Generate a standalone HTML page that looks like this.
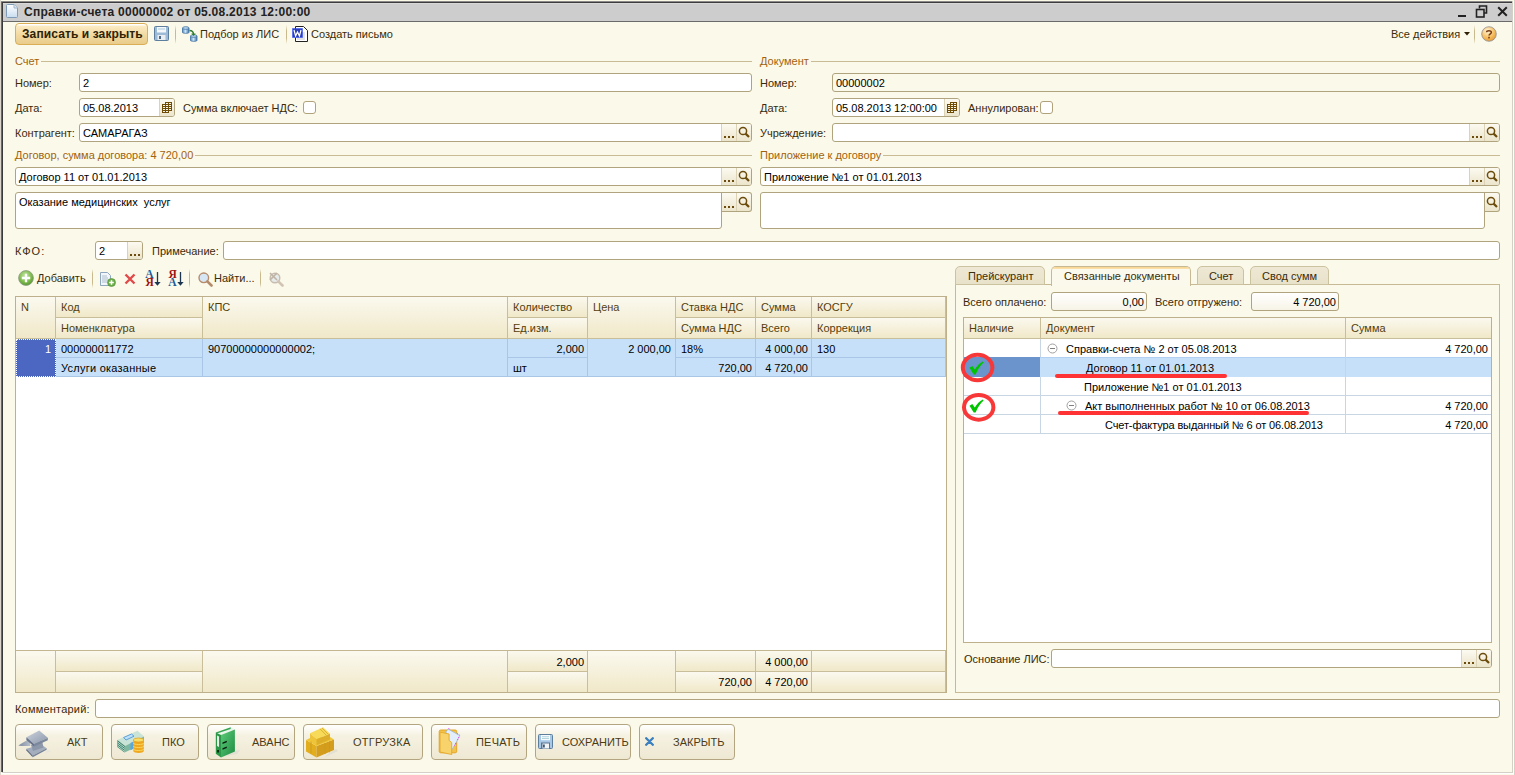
<!DOCTYPE html><html><head><meta charset="utf-8"><style>
*{box-sizing:border-box}
html,body{margin:0;padding:0;width:1515px;height:775px;overflow:hidden;background:#EDEBE2}
body{position:relative;font:11px "Liberation Sans",sans-serif;color:#000}
.a{position:absolute}
.t{position:absolute;white-space:nowrap;line-height:13px}
.lb{color:#3A2A0A}
.gl{color:#A2620C}
.in{background:#fff;border:1px solid #AFA47E;border-radius:3px}
.ro{background:#FBF9EA}
.bb{background:linear-gradient(#FCFAF1,#ECE5CC);border-left:1px solid #DCD3B6}
.hd{background:linear-gradient(#FBF9EF,#F0E8C8);border-right:1px solid #C8BE9A;border-bottom:1px solid #C8BE9A}
.ht{color:#533E0E}
.bt{color:#3A2D0A}
.btn{border:1px solid #B3A57F;border-radius:4px;background:linear-gradient(#FFFFFF 0%,#F6F2E2 30%,#EEE8D3 100%)}
</style></head><body>
<div class="a " style="left:0px;top:0px;width:1515px;height:775px;background:#FBF9E8"></div>
<div class="a " style="left:0px;top:0px;width:1px;height:775px;background:#DAD6CC"></div>
<div class="a " style="left:1px;top:3px;width:1511px;height:769px;background:#FBF9EA"></div>
<div class="a " style="left:1px;top:1px;width:1px;height:771px;background:#6A6A6A"></div>
<div class="a " style="left:2px;top:1px;width:1px;height:771px;background:#3A3A3A"></div>
<div class="a " style="left:1px;top:1px;width:1511px;height:1px;background:#8A8A8A"></div>
<div class="a " style="left:2px;top:2px;width:1510px;height:1px;background:#3C3C3C"></div>
<div class="a " style="left:1512px;top:1px;width:1px;height:772px;background:#D4D0C8"></div>
<div class="a " style="left:1513px;top:1px;width:1px;height:773px;background:#FFFFFF"></div>
<div class="a " style="left:1514px;top:0px;width:1px;height:775px;background:#D4D0C8"></div>
<div class="a " style="left:2px;top:772px;width:1511px;height:1px;background:#D4D0C8"></div>
<div class="a " style="left:1px;top:773px;width:1513px;height:1px;background:#FFFFFF"></div>
<div class="a " style="left:3px;top:3px;width:1509px;height:18px;background:#CDCDCD"></div>
<div class="a " style="left:3px;top:3px;width:1509px;height:1px;background:#D8D8D8"></div>
<div class="a " style="left:3px;top:21px;width:1509px;height:1px;background:#6A6A6A"></div>
<svg class="a" style="left:6px;top:4px" width="12" height="14" viewBox="0 0 12 14">
<defs><linearGradient id="dg" x1="0" y1="0" x2="0" y2="1"><stop offset="0" stop-color="#fff"/><stop offset="1" stop-color="#C9DDF0"/></linearGradient></defs>
<path d="M0.5 1.5Q0.5 0.5 1.5 0.5H8L11.5 4V12.5Q11.5 13.5 10.5 13.5H1.5Q0.5 13.5 0.5 12.5Z" fill="url(#dg)" stroke="#7E9BB8"/>
<path d="M8 0.5V4H11.5" fill="#DDE8F3" stroke="#9FB6CC"/></svg>
<div class="t " style="left:24px;top:6px;font-weight:bold;font-size:12px;letter-spacing:0.26px;color:#222">Справки-счета 00000002 от 05.08.2013 12:00:00</div>
<div class="a " style="left:1458px;top:15px;width:8px;height:2px;background:#222"></div>
<svg class="a" style="left:1475px;top:5px" width="14" height="13" viewBox="0 0 14 13">
<path d="M4.5 3.5V1H11.5V8H9" fill="none" stroke="#222" stroke-width="1.6"/>
<rect x="1.5" y="4.5" width="7.5" height="7.5" fill="none" stroke="#222" stroke-width="1.6"/></svg>
<svg class="a" style="left:1497px;top:6px" width="11" height="11" viewBox="0 0 11 11">
<path d="M1.2 1.2L9.8 9.8M9.8 1.2L1.2 9.8" stroke="#222" stroke-width="2"/></svg>
<div class="a" style="left:15px;top:23px;width:133px;height:22px;border:1px solid #D9AE55;border-radius:4px;background:linear-gradient(#FFFFFF 0,#FFFFFF 1px,#FBEBC4 2px,#F2D9A0 55%,#E9CC8C)"></div>
<div class="t " style="left:22px;top:28px;font-weight:bold;font-size:12px;letter-spacing:0.1px;color:#2E2206">Записать и закрыть</div>
<svg class="a" style="left:154px;top:26px" width="15" height="15" viewBox="0 0 15 15">
<rect x="0.5" y="0.5" width="14" height="14" rx="1" fill="#9DBAD6" stroke="#5E7E9E"/>
<rect x="3" y="1" width="9" height="5.5" fill="#F4F8FB"/><rect x="4" y="2.5" width="7" height="1" fill="#A9C7DF"/>
<rect x="3.5" y="9" width="8" height="5" fill="#E9EEF2"/><rect x="5" y="10" width="2" height="3" fill="#4E6A86"/></svg>
<div class="a " style="left:175px;top:25px;width:1px;height:19px;background:linear-gradient(rgba(196,182,140,0),#C9BA8E 30%,#C9BA8E 70%,rgba(196,182,140,0))"></div>
<svg class="a" style="left:182px;top:26px" width="16" height="16" viewBox="0 0 16 16">
<defs><linearGradient id="cy" x1="0" x2="1"><stop offset="0" stop-color="#4F8BC0"/><stop offset=".45" stop-color="#CFE6F7"/><stop offset="1" stop-color="#3C76AE"/></linearGradient></defs>
<path d="M0.5 2V6.5C0.5 7.6 7 7.6 7 6.5V2" fill="url(#cy)" stroke="#3E6F9E" stroke-width=".8"/><ellipse cx="3.75" cy="2" rx="3.25" ry="1.3" fill="#BFDDF3" stroke="#3E6F9E" stroke-width=".8"/>
<path d="M8.5 10V14.5C8.5 15.6 15 15.6 15 14.5V10" fill="url(#cy)" stroke="#3E6F9E" stroke-width=".8"/><ellipse cx="11.75" cy="10" rx="3.25" ry="1.3" fill="#BFDDF3" stroke="#3E6F9E" stroke-width=".8"/>
<path d="M7.5 4.5C10 4.5 11.5 6 11.5 8.5" fill="none" stroke="#2E7A2E" stroke-width="1.3"/><path d="M9.3 7.5L11.5 10L13.7 7.5Z" fill="#2E7A2E"/></svg>
<div class="t bt" style="left:200px;top:28px;">Подбор из ЛИС</div>
<div class="a " style="left:286px;top:25px;width:1px;height:19px;background:linear-gradient(rgba(196,182,140,0),#C9BA8E 30%,#C9BA8E 70%,rgba(196,182,140,0))"></div>
<svg class="a" style="left:292px;top:26px" width="16" height="16" viewBox="0 0 16 16">
<path d="M3.5 0.5H11.5L15.5 4.5V15.5H3.5Z" fill="#fff" stroke="#222"/><path d="M5 7h8M5 9h8M5 11h8M5 13h8" stroke="#BBB" stroke-width=".8"/>
<rect x="0.5" y="2.5" width="10" height="9" fill="#2A3FB8" stroke="#2B4BFF" stroke-dasharray="1 1"/>
<path d="M2 4L3.6 10L5.5 6L7.4 10L9 4" fill="none" stroke="#fff" stroke-width="1.2"/></svg>
<div class="t bt" style="left:311px;top:28px;">Создать письмо</div>
<div class="t bt" style="left:1391px;top:28px;">Все действия</div>
<svg class="a" style="left:1464px;top:32px" width="6" height="4" viewBox="0 0 6 4"><path d="M0 0H6L3 3.5Z" fill="#2E2206"/></svg>
<div class="a " style="left:1474px;top:25px;width:1px;height:19px;background:linear-gradient(rgba(196,182,140,0),#C9BA8E 30%,#C9BA8E 70%,rgba(196,182,140,0))"></div>
<svg class="a" style="left:1481px;top:26px" width="16" height="16" viewBox="0 0 16 16">
<defs><radialGradient id="hg" cx=".4" cy=".3" r=".8"><stop offset="0" stop-color="#FFF6E0"/><stop offset=".5" stop-color="#F8C46A"/><stop offset="1" stop-color="#E0902A"/></radialGradient></defs>
<circle cx="8" cy="8" r="7.3" fill="url(#hg)" stroke="#8E8E96" stroke-width=".8"/>
<path d="M5.6 6.2C5.6 4.2 10.4 4.2 10.4 6.2C10.4 7.8 8 7.8 8 9.6" fill="none" stroke="#7A3E12" stroke-width="1.5"/><rect x="7.2" y="10.8" width="1.6" height="1.6" fill="#7A3E12"/></svg>
<div class="t gl" style="left:15px;top:55px;">Счет</div>
<div class="a" style="left:15px;top:61px;width:737px;height:1px;background:#C9BC95"></div>
<div class="t gl" style="left:15px;top:55px;background:#FBF9EA;padding-right:2px">Счет</div>
<div class="t gl" style="left:760px;top:55px;">Документ</div>
<div class="a" style="left:760px;top:61px;width:740px;height:1px;background:#C9BC95"></div>
<div class="t gl" style="left:760px;top:55px;background:#FBF9EA;padding-right:2px">Документ</div>
<div class="t lb" style="left:15px;top:77px;">Номер:</div>
<div class="a in" style="left:79px;top:73px;width:673px;height:19px;"></div>
<div class="t " style="left:83px;top:77px;">2</div>
<div class="t lb" style="left:760px;top:77px;">Номер:</div>
<div class="a in ro" style="left:832px;top:73px;width:668px;height:19px;"></div>
<div class="t " style="left:836px;top:77px;">00000002</div>
<div class="t lb" style="left:15px;top:102px;">Дата:</div>
<div class="a in" style="left:79px;top:98px;width:96px;height:19px;"></div>
<div class="a bb" style="left:159px;top:99px;width:15px;height:17px;border-radius:0 2px 2px 0"></div>
<svg class="a" style="left:162px;top:102px" width="11" height="11" viewBox="0 0 11 11" shape-rendering="crispEdges"><path d="M3 0H10V9H7V11H0V2H3Z" fill="#6E4C05"/><path d="M4 1h2v1h-2zM7 1h2v1h-2zM1 3h2v1h-2zM4 3h2v1h-2zM7 3h2v1h-2zM1 5h2v1h-2zM4 5h2v1h-2zM7 5h2v1h-2zM1 7h2v1h-2zM4 7h2v1h-2zM7 7h2v1h-2zM1 9h2v1h-2zM4 9h2v1h-2z" fill="#FBF6E6"/></svg>
<div class="t " style="left:83px;top:102px;">05.08.2013</div>
<div class="t lb" style="left:183px;top:102px;">Сумма включает НДС:</div>
<div class="a" style="left:303px;top:101px;width:13px;height:13px;border:1px solid #B0A27B;border-radius:3px;background:#fff"></div>
<div class="t lb" style="left:760px;top:102px;">Дата:</div>
<div class="a in" style="left:832px;top:98px;width:128px;height:19px;"></div>
<div class="a bb" style="left:944px;top:99px;width:15px;height:17px;border-radius:0 2px 2px 0"></div>
<svg class="a" style="left:947px;top:102px" width="11" height="11" viewBox="0 0 11 11" shape-rendering="crispEdges"><path d="M3 0H10V9H7V11H0V2H3Z" fill="#6E4C05"/><path d="M4 1h2v1h-2zM7 1h2v1h-2zM1 3h2v1h-2zM4 3h2v1h-2zM7 3h2v1h-2zM1 5h2v1h-2zM4 5h2v1h-2zM7 5h2v1h-2zM1 7h2v1h-2zM4 7h2v1h-2zM7 7h2v1h-2zM1 9h2v1h-2zM4 9h2v1h-2z" fill="#FBF6E6"/></svg>
<div class="t " style="left:836px;top:102px;">05.08.2013 12:00:00</div>
<div class="t lb" style="left:968px;top:102px;">Аннулирован:</div>
<div class="a" style="left:1040px;top:101px;width:13px;height:13px;border:1px solid #B0A27B;border-radius:3px;background:#fff"></div>
<div class="t lb" style="left:15px;top:127px;">Контрагент:</div>
<div class="a in" style="left:79px;top:123px;width:673px;height:19px;"></div>
<div class="a bb" style="left:721px;top:124px;width:30px;height:17px;border-radius:0 2px 2px 0"></div>
<svg class="a" style="left:724px;top:136px" width="12" height="3"><rect x="0" y="0" width="2" height="2" fill="#6B4C0C"/><rect x="4" y="0" width="2" height="2" fill="#6B4C0C"/><rect x="8" y="0" width="2" height="2" fill="#6B4C0C"/></svg>
<div class="a" style="left:736px;top:124px;width:1px;height:17px;background:#DCD3B6"></div>
<svg class="a" style="left:738px;top:126px" width="13" height="13" viewBox="0 0 13 13"><circle cx="5" cy="5" r="3.6" fill="none" stroke="#6B4C0C" stroke-width="1.5"/><path d="M7.6 7.6L11 11" stroke="#6B4C0C" stroke-width="2.2"/></svg>
<div class="t " style="left:83px;top:127px;">САМАРАГАЗ</div>
<div class="t lb" style="left:760px;top:127px;">Учреждение:</div>
<div class="a in" style="left:832px;top:123px;width:668px;height:19px;"></div>
<div class="a bb" style="left:1469px;top:124px;width:30px;height:17px;border-radius:0 2px 2px 0"></div>
<svg class="a" style="left:1472px;top:136px" width="12" height="3"><rect x="0" y="0" width="2" height="2" fill="#6B4C0C"/><rect x="4" y="0" width="2" height="2" fill="#6B4C0C"/><rect x="8" y="0" width="2" height="2" fill="#6B4C0C"/></svg>
<div class="a" style="left:1484px;top:124px;width:1px;height:17px;background:#DCD3B6"></div>
<svg class="a" style="left:1486px;top:126px" width="13" height="13" viewBox="0 0 13 13"><circle cx="5" cy="5" r="3.6" fill="none" stroke="#6B4C0C" stroke-width="1.5"/><path d="M7.6 7.6L11 11" stroke="#6B4C0C" stroke-width="2.2"/></svg>
<div class="t gl" style="left:15px;top:149px;">Договор, сумма договора: 4 720,00</div>
<div class="a" style="left:15px;top:155px;width:737px;height:1px;background:#C9BC95"></div>
<div class="t gl" style="left:15px;top:149px;background:#FBF9EA;padding-right:2px">Договор, сумма договора: 4 720,00</div>
<div class="t gl" style="left:760px;top:149px;">Приложение к договору</div>
<div class="a" style="left:760px;top:155px;width:740px;height:1px;background:#C9BC95"></div>
<div class="t gl" style="left:760px;top:149px;background:#FBF9EA;padding-right:2px">Приложение к договору</div>
<div class="a in" style="left:15px;top:167px;width:737px;height:19px;"></div>
<div class="a bb" style="left:721px;top:168px;width:30px;height:17px;border-radius:0 2px 2px 0"></div>
<svg class="a" style="left:724px;top:180px" width="12" height="3"><rect x="0" y="0" width="2" height="2" fill="#6B4C0C"/><rect x="4" y="0" width="2" height="2" fill="#6B4C0C"/><rect x="8" y="0" width="2" height="2" fill="#6B4C0C"/></svg>
<div class="a" style="left:736px;top:168px;width:1px;height:17px;background:#DCD3B6"></div>
<svg class="a" style="left:738px;top:170px" width="13" height="13" viewBox="0 0 13 13"><circle cx="5" cy="5" r="3.6" fill="none" stroke="#6B4C0C" stroke-width="1.5"/><path d="M7.6 7.6L11 11" stroke="#6B4C0C" stroke-width="2.2"/></svg>
<div class="t " style="left:19px;top:171px;">Договор 11 от 01.01.2013</div>
<div class="a in" style="left:760px;top:167px;width:740px;height:19px;"></div>
<div class="a bb" style="left:1469px;top:168px;width:30px;height:17px;border-radius:0 2px 2px 0"></div>
<svg class="a" style="left:1472px;top:180px" width="12" height="3"><rect x="0" y="0" width="2" height="2" fill="#6B4C0C"/><rect x="4" y="0" width="2" height="2" fill="#6B4C0C"/><rect x="8" y="0" width="2" height="2" fill="#6B4C0C"/></svg>
<div class="a" style="left:1484px;top:168px;width:1px;height:17px;background:#DCD3B6"></div>
<svg class="a" style="left:1486px;top:170px" width="13" height="13" viewBox="0 0 13 13"><circle cx="5" cy="5" r="3.6" fill="none" stroke="#6B4C0C" stroke-width="1.5"/><path d="M7.6 7.6L11 11" stroke="#6B4C0C" stroke-width="2.2"/></svg>
<div class="t " style="left:764px;top:171px;">Приложение №1 от 01.01.2013</div>
<div class="a in" style="left:15px;top:192px;width:707px;height:37px;border-top-right-radius:0"></div>
<div class="t " style="left:19px;top:196px;">Оказание медицинских&nbsp; услуг</div>
<div class="a" style="left:721px;top:192px;width:31px;height:20px;border:1px solid #AFA47E;border-left:0;border-radius:0 3px 3px 0;background:linear-gradient(#FCFAF1,#ECE5CC)"></div>
<div class="a" style="left:721px;top:193px;width:1px;height:33px;background:#AFA47E"></div>
<div class="a" style="left:736px;top:193px;width:1px;height:18px;background:#DCD3B6"></div>
<svg class="a" style="left:724px;top:206px" width="12" height="3"><rect x="0" y="0" width="2" height="2" fill="#6B4C0C"/><rect x="4" y="0" width="2" height="2" fill="#6B4C0C"/><rect x="8" y="0" width="2" height="2" fill="#6B4C0C"/></svg>
<svg class="a" style="left:738px;top:196px" width="13" height="13" viewBox="0 0 13 13"><circle cx="5" cy="5" r="3.6" fill="none" stroke="#6B4C0C" stroke-width="1.5"/><path d="M7.6 7.6L11 11" stroke="#6B4C0C" stroke-width="2.2"/></svg>
<div class="a in" style="left:760px;top:192px;width:725px;height:37px;border-top-right-radius:0"></div>
<div class="a" style="left:1484px;top:192px;width:16px;height:20px;border:1px solid #AFA47E;border-left:0;border-radius:0 3px 3px 0;background:linear-gradient(#FCFAF1,#ECE5CC)"></div>
<div class="a" style="left:1484px;top:193px;width:1px;height:33px;background:#AFA47E"></div>
<svg class="a" style="left:1486px;top:196px" width="13" height="13" viewBox="0 0 13 13"><circle cx="5" cy="5" r="3.6" fill="none" stroke="#6B4C0C" stroke-width="1.5"/><path d="M7.6 7.6L11 11" stroke="#6B4C0C" stroke-width="2.2"/></svg>
<div class="t lb" style="left:15px;top:245px;letter-spacing:1.1px">КФО:</div>
<div class="a in" style="left:95px;top:241px;width:48px;height:19px;"></div>
<div class="a bb" style="left:127px;top:242px;width:15px;height:17px;border-radius:0 2px 2px 0"></div>
<svg class="a" style="left:130px;top:254px" width="12" height="3"><rect x="0" y="0" width="2" height="2" fill="#6B4C0C"/><rect x="4" y="0" width="2" height="2" fill="#6B4C0C"/><rect x="8" y="0" width="2" height="2" fill="#6B4C0C"/></svg>
<div class="t " style="left:99px;top:245px;">2</div>
<div class="t lb" style="left:152px;top:245px;">Примечание:</div>
<div class="a in" style="left:223px;top:241px;width:1277px;height:19px;"></div>
<svg class="a" style="left:18px;top:270px" width="16" height="16" viewBox="0 0 16 16">
<defs><radialGradient id="gg" cx=".45" cy=".35" r=".7"><stop offset="0" stop-color="#C8E6A8"/><stop offset=".6" stop-color="#7DBB4C"/><stop offset="1" stop-color="#4E8F2A"/></radialGradient></defs>
<circle cx="8" cy="8" r="7.4" fill="url(#gg)" stroke="#8A9A80" stroke-width=".8"/><path d="M8 3.8V12.2M3.8 8H12.2" stroke="#fff" stroke-width="2.3"/></svg>
<div class="t bt" style="left:37px;top:272px;">Добавить</div>
<div class="a" style="left:92px;top:269px;width:1px;height:19px;background:linear-gradient(rgba(201,186,142,0),#C9BA8E 25%,#C9BA8E 75%,rgba(201,186,142,0))"></div>
<svg class="a" style="left:100px;top:272px" width="16" height="15" viewBox="0 0 16 15">
<path d="M0.5 0.5H7.5L10.5 3.5V13.5H0.5Z" fill="#F2F6FA" stroke="#8EA6BE"/><path d="M2 4h5M2 6h6M2 8h6M2 10h5" stroke="#9DB0C4" stroke-width=".8"/>
<circle cx="11.5" cy="10.5" r="4" fill="#6DB04A" stroke="#4F8A33" stroke-width=".6"/><path d="M11.5 8.2V12.8M9.2 10.5H13.8" stroke="#fff" stroke-width="1.5"/></svg>
<svg class="a" style="left:124px;top:273px" width="12" height="12" viewBox="0 0 12 12">
<path d="M1.5 1.5L10.5 10.5M10.5 1.5L1.5 10.5" stroke="#E04A4A" stroke-width="2.4"/></svg>
<svg class="a" style="left:144px;top:268px" width="20" height="20" viewBox="0 0 20 20">
<text x="1.3" y="10" font-family="Liberation Serif" font-weight="bold" font-size="11.5" fill="#1F5E9C">A</text>
<text x="1.6" y="18.3" font-family="Liberation Serif" font-weight="bold" font-size="11.5" fill="#A01010">Я</text>
<path d="M13.5 4V15" stroke="#1C3550" stroke-width="1.3"/><path d="M10.3 14H16.6L13.45 17.8Z" fill="#1C3550"/></svg>
<svg class="a" style="left:167px;top:268px" width="20" height="20" viewBox="0 0 20 20">
<text x="1.6" y="10.2" font-family="Liberation Serif" font-weight="bold" font-size="11.5" fill="#A01010">Я</text>
<text x="1.3" y="18.2" font-family="Liberation Serif" font-weight="bold" font-size="11.5" fill="#1F5E9C">A</text>
<path d="M13.5 4V15" stroke="#1C3550" stroke-width="1.3"/><path d="M10.3 14H16.6L13.45 17.8Z" fill="#1C3550"/></svg>
<div class="a" style="left:189px;top:269px;width:1px;height:19px;background:linear-gradient(rgba(201,186,142,0),#C9BA8E 25%,#C9BA8E 75%,rgba(201,186,142,0))"></div>
<svg class="a" style="left:198px;top:272px" width="15" height="15" viewBox="0 0 15 15">
<circle cx="5.8" cy="5.8" r="4.8" fill="#D6E6F5" stroke="#B58B6A" stroke-width="1.4"/><path d="M9.3 9.3L13.5 13.5" stroke="#B58B6A" stroke-width="2.6" stroke-linecap="round"/></svg>
<div class="t bt" style="left:214px;top:272px;">Найти...</div>
<div class="a" style="left:260px;top:269px;width:1px;height:19px;background:linear-gradient(rgba(201,186,142,0),#C9BA8E 25%,#C9BA8E 75%,rgba(201,186,142,0))"></div>
<svg class="a" style="left:268px;top:271px" width="16" height="16" viewBox="0 0 16 16" opacity=".55">
<circle cx="7" cy="7" r="4.8" fill="#D6E0EA" stroke="#A08C7C" stroke-width="1.4"/><path d="M10.3 10.3L14.5 14.5" stroke="#B09A88" stroke-width="2.6" stroke-linecap="round"/>
<path d="M2 2L9 9M9 2L2 9" stroke="#8E7A6C" stroke-width="1.6"/></svg>
<div class="a" style="left:15px;top:296px;width:932px;height:397px;background:#fff;border:1px solid #BDB08A"></div>
<div class="a hd" style="left:16px;top:297px;width:40px;height:42px"></div>
<div class="t ht" style="left:21px;top:301px;">N</div>
<div class="a hd" style="left:56px;top:297px;width:147px;height:21px"></div>
<div class="a hd" style="left:56px;top:318px;width:147px;height:21px"></div>
<div class="t ht" style="left:61px;top:301px;">Код</div>
<div class="t ht" style="left:61px;top:322px;">Номенклатура</div>
<div class="a hd" style="left:203px;top:297px;width:305px;height:42px"></div>
<div class="t ht" style="left:208px;top:301px;">КПС</div>
<div class="a hd" style="left:508px;top:297px;width:80px;height:21px"></div>
<div class="a hd" style="left:508px;top:318px;width:80px;height:21px"></div>
<div class="t ht" style="left:513px;top:301px;">Количество</div>
<div class="t ht" style="left:513px;top:322px;">Ед.изм.</div>
<div class="a hd" style="left:588px;top:297px;width:88px;height:42px"></div>
<div class="t ht" style="left:593px;top:301px;">Цена</div>
<div class="a hd" style="left:676px;top:297px;width:80px;height:21px"></div>
<div class="a hd" style="left:676px;top:318px;width:80px;height:21px"></div>
<div class="t ht" style="left:681px;top:301px;">Ставка НДС</div>
<div class="t ht" style="left:681px;top:322px;">Сумма НДС</div>
<div class="a hd" style="left:756px;top:297px;width:56px;height:21px"></div>
<div class="a hd" style="left:756px;top:318px;width:56px;height:21px"></div>
<div class="t ht" style="left:761px;top:301px;">Сумма</div>
<div class="t ht" style="left:761px;top:322px;">Всего</div>
<div class="a hd" style="left:812px;top:297px;width:134px;height:21px"></div>
<div class="a hd" style="left:812px;top:318px;width:134px;height:21px"></div>
<div class="t ht" style="left:817px;top:301px;">КОСГУ</div>
<div class="t ht" style="left:817px;top:322px;">Коррекция</div>
<div class="a" style="left:16px;top:339px;width:930px;height:38px;background:#C7E0FA;border-bottom:1px solid #A9C6E6"></div>
<div class="a" style="left:202px;top:339px;width:1px;height:38px;background:#A9C6E6"></div>
<div class="a" style="left:56px;top:357px;width:146px;height:1px;background:#A9C6E6"></div>
<div class="a" style="left:507px;top:339px;width:1px;height:38px;background:#A9C6E6"></div>
<div class="a" style="left:587px;top:339px;width:1px;height:38px;background:#A9C6E6"></div>
<div class="a" style="left:508px;top:357px;width:79px;height:1px;background:#A9C6E6"></div>
<div class="a" style="left:675px;top:339px;width:1px;height:38px;background:#A9C6E6"></div>
<div class="a" style="left:755px;top:339px;width:1px;height:38px;background:#A9C6E6"></div>
<div class="a" style="left:676px;top:357px;width:79px;height:1px;background:#A9C6E6"></div>
<div class="a" style="left:811px;top:339px;width:1px;height:38px;background:#A9C6E6"></div>
<div class="a" style="left:756px;top:357px;width:55px;height:1px;background:#A9C6E6"></div>
<div class="a" style="left:945px;top:339px;width:1px;height:38px;background:#A9C6E6"></div>
<div class="a" style="left:812px;top:357px;width:133px;height:1px;background:#A9C6E6"></div>
<div class="a" style="left:16px;top:339px;width:40px;height:38px;background:#4B67C1;border:1px dotted #fff"></div>
<div class="t " style="right:1464px;top:343px;color:#fff">1</div>
<div class="t " style="left:61px;top:343px;">000000011772</div>
<div class="t " style="left:61px;top:362px;letter-spacing:0.25px">Услуги оказанные</div>
<div class="t " style="left:208px;top:343px;">90700000000000002;</div>
<div class="t " style="right:931px;top:343px;">2,000</div>
<div class="t " style="left:513px;top:362px;">шт</div>
<div class="t " style="right:844px;top:343px;">2 000,00</div>
<div class="t " style="left:681px;top:343px;">18%</div>
<div class="t " style="right:763px;top:362px;">720,00</div>
<div class="t " style="right:707px;top:343px;">4 000,00</div>
<div class="t " style="right:707px;top:362px;">4 720,00</div>
<div class="t " style="left:817px;top:343px;">130</div>
<div class="a hd" style="left:16px;top:650px;width:40px;height:42px;border-top:1px solid #C3B791;border-bottom:0"></div>
<div class="a hd" style="left:56px;top:650px;width:147px;height:22px;border-top:1px solid #C3B791"></div>
<div class="a hd" style="left:56px;top:672px;width:147px;height:20px;border-bottom:0"></div>
<div class="a hd" style="left:203px;top:650px;width:305px;height:42px;border-top:1px solid #C3B791;border-bottom:0"></div>
<div class="a hd" style="left:508px;top:650px;width:80px;height:22px;border-top:1px solid #C3B791"></div>
<div class="a hd" style="left:508px;top:672px;width:80px;height:20px;border-bottom:0"></div>
<div class="a hd" style="left:588px;top:650px;width:88px;height:42px;border-top:1px solid #C3B791;border-bottom:0"></div>
<div class="a hd" style="left:676px;top:650px;width:80px;height:22px;border-top:1px solid #C3B791"></div>
<div class="a hd" style="left:676px;top:672px;width:80px;height:20px;border-bottom:0"></div>
<div class="a hd" style="left:756px;top:650px;width:56px;height:22px;border-top:1px solid #C3B791"></div>
<div class="a hd" style="left:756px;top:672px;width:56px;height:20px;border-bottom:0"></div>
<div class="a hd" style="left:812px;top:650px;width:134px;height:22px;border-top:1px solid #C3B791"></div>
<div class="a hd" style="left:812px;top:672px;width:134px;height:20px;border-bottom:0"></div>
<div class="t " style="right:931px;top:656px;">2,000</div>
<div class="t " style="right:707px;top:656px;">4 000,00</div>
<div class="t " style="right:763px;top:676px;">720,00</div>
<div class="t " style="right:707px;top:676px;">4 720,00</div>
<div class="a" style="left:955px;top:284px;width:545px;height:409px;border:1px solid #C6B994;background:#FBF9EA"></div>
<div class="a" style="left:955px;top:266px;width:90px;height:19px;border:1px solid #C6B994;border-radius:5px 5px 0 0;border-color:#CBC2A0;background:linear-gradient(#EEE8D4,#E9E2CA)"></div>
<div class="t bt" style="left:968px;top:270px;">Прейскурант</div>
<div class="a" style="left:1051px;top:266px;width:140px;height:20px;border:1px solid #C6B994;border-bottom:0;border-radius:5px 5px 0 0;background:linear-gradient(#FBF9EC,#FBF9EC);overflow:hidden"><div style="height:2px;background:linear-gradient(#F8D48C,#FBE2B0)"></div></div>
<div class="t bt" style="left:1064px;top:270px;">Связанные документы</div>
<div class="a" style="left:1197px;top:266px;width:47px;height:19px;border:1px solid #C6B994;border-radius:5px 5px 0 0;border-color:#CBC2A0;background:linear-gradient(#EEE8D4,#E9E2CA)"></div>
<div class="t bt" style="left:1209px;top:270px;">Счет</div>
<div class="a" style="left:1250px;top:266px;width:79px;height:19px;border:1px solid #C6B994;border-radius:5px 5px 0 0;border-color:#CBC2A0;background:linear-gradient(#EEE8D4,#E9E2CA)"></div>
<div class="t bt" style="left:1262px;top:270px;">Свод сумм</div>
<div class="t lb" style="left:963px;top:296px;">Всего оплачено:</div>
<div class="a in ro" style="left:1051px;top:292px;width:96px;height:19px;background:linear-gradient(#FFFFFF,#F7F4E6)"></div>
<div class="t " style="right:371px;top:296px;">0,00</div>
<div class="t lb" style="left:1155px;top:296px;">Всего отгружено:</div>
<div class="a in ro" style="left:1251px;top:292px;width:88px;height:19px;background:linear-gradient(#FFFFFF,#F7F4E6)"></div>
<div class="t " style="right:179px;top:296px;">4 720,00</div>
<div class="a" style="left:963px;top:317px;width:529px;height:326px;background:#fff;border:1px solid #BDB08A"></div>
<div class="a hd" style="left:964px;top:318px;width:77px;height:21px;"></div>
<div class="t ht" style="left:969px;top:322px;">Наличие</div>
<div class="a hd" style="left:1041px;top:318px;width:305px;height:21px;"></div>
<div class="t ht" style="left:1046px;top:322px;">Документ</div>
<div class="a hd" style="left:1346px;top:318px;width:145px;height:21px;border-right:0"></div>
<div class="t ht" style="left:1351px;top:322px;">Сумма</div>
<div class="a" style="left:964px;top:357px;width:527px;height:1px;background:#C8D5E3"></div>
<div class="a" style="left:964px;top:376px;width:527px;height:1px;background:#C8D5E3"></div>
<div class="a" style="left:964px;top:395px;width:527px;height:1px;background:#C8D5E3"></div>
<div class="a" style="left:964px;top:414px;width:527px;height:1px;background:#C8D5E3"></div>
<div class="a" style="left:964px;top:433px;width:527px;height:1px;background:#C8D5E3"></div>
<div class="a" style="left:1040px;top:339px;width:1px;height:95px;background:#C8D5E3"></div>
<div class="a" style="left:964px;top:357px;width:527px;height:20px;background:#C7E0FA;border-top:1px solid #B2D0F2"></div>
<div class="a" style="left:964px;top:357px;width:76px;height:20px;background:#6A94CB"></div>
<div class="a" style="left:1345px;top:339px;width:1px;height:95px;background:#C8D5E3"></div>
<svg class="a" style="left:1047px;top:343px" width="11" height="11" viewBox="0 0 11 11"><circle cx="5.5" cy="5.5" r="4.5" fill="#fff" stroke="#A0A0A0"/><path d="M3 5.5H8" stroke="#808080"/></svg>
<div class="t " style="left:1066px;top:343px;">Справки-счета № 2 от 05.08.2013</div>
<div class="t " style="right:27px;top:343px;">4 720,00</div>
<div class="t " style="left:1086px;top:362px;">Договор 11 от 01.01.2013</div>
<div class="t " style="left:1084px;top:381px;">Приложение №1 от 01.01.2013</div>
<svg class="a" style="left:1066px;top:400px" width="11" height="11" viewBox="0 0 11 11"><circle cx="5.5" cy="5.5" r="4.5" fill="#fff" stroke="#A0A0A0"/><path d="M3 5.5H8" stroke="#808080"/></svg>
<div class="t " style="left:1085px;top:400px;">Акт выполненных работ № 10 от 06.08.2013</div>
<div class="t " style="right:27px;top:400px;">4 720,00</div>
<div class="t " style="left:1105px;top:419px;letter-spacing:-0.12px">Счет-фактура выданный № 6 от 06.08.2013</div>
<div class="t " style="right:27px;top:419px;">4 720,00</div>
<svg class="a" style="left:969px;top:361px" width="15" height="14" viewBox="0 0 15 14"><path d="M0.5 6.8L3.3 5L5.8 8.6C8 5 10.5 2.3 13.8 0.5L14.6 1.4C11.5 4 8.8 8 6.6 13.5H4.7Z" fill="#00C400"/></svg>
<svg class="a" style="left:969px;top:399px" width="15" height="14" viewBox="0 0 15 14"><path d="M0.5 6.8L3.3 5L5.8 8.6C8 5 10.5 2.3 13.8 0.5L14.6 1.4C11.5 4 8.8 8 6.6 13.5H4.7Z" fill="#00C400"/></svg>
<svg class="a" style="left:958px;top:350px" width="42" height="36" viewBox="0 0 42 36"><ellipse cx="19.6" cy="17.5" rx="14.8" ry="12.8" fill="none" stroke="#F83838" stroke-width="4"/></svg>
<svg class="a" style="left:958px;top:389px" width="42" height="36" viewBox="0 0 42 36"><ellipse cx="20.7" cy="18.3" rx="14.7" ry="12.4" fill="none" stroke="#F83838" stroke-width="4"/></svg>
<div class="a" style="left:1055px;top:374px;width:172px;height:4px;border-radius:2px;background:#FF3333"></div>
<div class="a" style="left:1058px;top:411px;width:251px;height:4px;border-radius:2px;background:#FF3333"></div>
<div class="t lb" style="left:964px;top:653px;">Основание ЛИС:</div>
<div class="a in" style="left:1051px;top:649px;width:441px;height:19px;"></div>
<div class="a bb" style="left:1461px;top:650px;width:30px;height:17px;border-radius:0 2px 2px 0"></div>
<svg class="a" style="left:1464px;top:662px" width="12" height="3"><rect x="0" y="0" width="2" height="2" fill="#6B4C0C"/><rect x="4" y="0" width="2" height="2" fill="#6B4C0C"/><rect x="8" y="0" width="2" height="2" fill="#6B4C0C"/></svg>
<div class="a" style="left:1476px;top:650px;width:1px;height:17px;background:#DCD3B6"></div>
<svg class="a" style="left:1478px;top:652px" width="13" height="13" viewBox="0 0 13 13"><circle cx="5" cy="5" r="3.6" fill="none" stroke="#6B4C0C" stroke-width="1.5"/><path d="M7.6 7.6L11 11" stroke="#6B4C0C" stroke-width="2.2"/></svg>
<div class="t lb" style="left:15px;top:703px;letter-spacing:0.2px">Комментарий:</div>
<div class="a in" style="left:95px;top:699px;width:1405px;height:19px;"></div>
<div class="a btn" style="left:15px;top:724px;width:88px;height:36px"></div>
<div class="t bt" style="left:67px;top:736px;letter-spacing:0px;color:#4A3B14">АКТ</div>
<div class="a btn" style="left:111px;top:724px;width:88px;height:36px"></div>
<div class="t bt" style="left:162px;top:736px;letter-spacing:0px;color:#4A3B14">ПКО</div>
<div class="a btn" style="left:207px;top:724px;width:88px;height:36px"></div>
<div class="t bt" style="left:252px;top:736px;letter-spacing:0px;color:#4A3B14">АВАНС</div>
<div class="a btn" style="left:303px;top:724px;width:120px;height:36px"></div>
<div class="t bt" style="left:353px;top:736px;letter-spacing:0.25px;color:#4A3B14">ОТГРУЗКА</div>
<div class="a btn" style="left:431px;top:724px;width:96px;height:36px"></div>
<div class="t bt" style="left:476px;top:736px;letter-spacing:0.2px;color:#4A3B14">ПЕЧАТЬ</div>
<div class="a btn" style="left:535px;top:724px;width:96px;height:36px"></div>
<div class="t bt" style="left:562px;top:736px;letter-spacing:0px;color:#4A3B14">СОХРАНИТЬ</div>
<div class="a btn" style="left:639px;top:724px;width:96px;height:36px"></div>
<div class="t bt" style="left:673px;top:736px;letter-spacing:0px;color:#4A3B14">ЗАКРЫТЬ</div>
<svg class="a" style="left:15px;top:724px" width="40" height="36" viewBox="0 0 40 36">
<defs><linearGradient id="an1" x1="0" y1="0" x2="1" y2="1"><stop offset="0" stop-color="#CDD3DD"/><stop offset="1" stop-color="#8A96AA"/></linearGradient>
<linearGradient id="an2" x1="0" y1="0" x2="1" y2="0"><stop offset="0" stop-color="#7C889C"/><stop offset="1" stop-color="#B9C1CE"/></linearGradient></defs>
<path d="M3.3 21.4C7 19 11 16.5 14.5 15.2L15.5 21.9C11 22.2 6 22.2 3.3 21.4Z" fill="url(#an2)"/>
<path d="M11.4 24.7L26 20.5L31.6 24.2L17.7 31.6Z" fill="#A3ADBE"/>
<path d="M11.4 24.7L17.7 31.6V33.2L11.4 26.4Z" fill="#5E6B82"/><path d="M17.7 31.6L31.6 24.2V25.8L17.7 33.2Z" fill="#76839A"/>
<path d="M16 21L27 16.5L28.5 23.5L18 27Z" fill="#8C97AA"/>
<path d="M11.4 13.3L24.2 6.5L32.8 13.7L19.1 20Z" fill="url(#an1)"/>
<path d="M11.4 13.3L19.1 20V22.6L11.4 15.9Z" fill="#66738A"/><path d="M19.1 20L32.8 13.7V16.3L19.1 22.6Z" fill="#7A879C"/>
<path d="M32 26L36 27L30 30Z" fill="#E3E3E0" opacity=".7"/></svg>
<svg class="a" style="left:111px;top:724px" width="36" height="34" viewBox="0 0 36 34">
<path d="M6.3 16L26.5 6.7L33 12.6L14 21.9Z" fill="#C9E3D6"/>
<path d="M6.3 16L14 21.9L13.5 28.6L6.3 23Z" fill="#3A836A"/>
<path d="M6.6 18L13.8 23.5M6.6 20L13.8 25.5M6.6 22L13.7 27.5" stroke="#D8EEE4" stroke-width=".8"/>
<path d="M14 21.9L33 12.6V19.5L13.5 28.6Z" fill="#7FB8A0"/>
<path d="M12.6 13.5L20.5 10L23 12.2L15 16Z" fill="#BFE0F6" stroke="#3F8FD8" stroke-width=".8"/>
<path d="M19.5 19L22 17.8V25L19.5 26.2Z" fill="#5AA6E0"/>
<path d="M22.3 16V27C22.3 29.5 32.8 29.5 32.8 27V16Z" fill="#EFA820"/>
<path d="M22.3 19C22.3 21 32.8 21 32.8 19M22.3 22C22.3 24 32.8 24 32.8 22M22.3 25C22.3 27 32.8 27 32.8 25" fill="none" stroke="#F8D860" stroke-width="1"/>
<ellipse cx="27.5" cy="16" rx="5.2" ry="2" fill="#F8E068" stroke="#E29A18" stroke-width=".7"/></svg>
<svg class="a" style="left:207px;top:724px" width="36" height="36" viewBox="0 0 36 36">
<path d="M28 27L33 26L30 30L18 32Z" fill="#DEDCD2" opacity=".8"/>
<path d="M8.8 8.4L23.7 3.3L27.9 5.6L14 10.9Z" fill="#E8F5EA"/>
<path d="M8.8 8.4L23.7 3.3V5L10 9.5Z" fill="#33A550"/>
<path d="M8.8 8.4L14 10.9V33.5L8.8 29.8Z" fill="#2B9848"/>
<path d="M10 11.5L12 12.5V23L10 22Z" fill="#E8EFE6"/><rect x="10" y="26" width="2" height="2.5" fill="#0E2A14"/>
<defs><linearGradient id="bn" x1="0" y1="0" x2="1" y2="1"><stop offset="0" stop-color="#5CCB78"/><stop offset="1" stop-color="#1E8C42"/></linearGradient></defs>
<path d="M14 10.9L27.9 5.6V27.4L14 33.5Z" fill="url(#bn)"/>
<path d="M15.5 18.5L19.8 16.8V18.3L15.5 20Z" fill="#0A1A0E"/><path d="M15.5 24.2L19.8 22.5V24L15.5 25.7Z" fill="#0A1A0E"/></svg>
<svg class="a" style="left:303px;top:724px" width="36" height="36" viewBox="0 0 36 36">
<path d="M25 30L33 25L35 27L22 33Z" fill="#DEDCD2" opacity=".8"/>
<path d="M3 16L13.5 22V33.5L3 27.5Z" fill="#E2AE1E"/>
<path d="M13.5 22L31 15.5V26L13.5 33.5Z" fill="#D49E1C"/>
<path d="M3 16L8 13.5L27 13L31 15.5L13.5 22Z" fill="#F0C636"/>
<path d="M8 17.5V29.5M22 19V30M26.5 17.3V28.3" stroke="#C99A20" stroke-width=".8"/>
<path d="M7 9.3L20 3.3L27 9.8L13.5 15.3Z" fill="#F7DA58"/>
<path d="M7 9.3L13.5 15.3V21.2L7 15.2Z" fill="#EEC53A"/>
<path d="M13.5 15.3L27 9.8V15.6L13.5 21.2Z" fill="#DDAE2A"/>
<path d="M17 4.8L23.5 11.5M19 4L25.5 10.5" stroke="#D6A82A" stroke-width=".8"/></svg>
<svg class="a" style="left:431px;top:724px" width="36" height="36" viewBox="0 0 36 36">
<rect x="8.2" y="6" width="17.5" height="22.8" rx="1.5" fill="#F2C24C" stroke="#E0A21E" stroke-width=".9"/>
<path d="M17 5L28.8 11.6L23.5 21.5L20 27L15 8Z" fill="#E2EEFB" stroke="#8AB0DA" stroke-width=".6"/>
<path d="M17.5 4.5L19.5 5.5M26 9.5L28.5 11M28 13L26 17M25 19L23.5 21.5" stroke="#FF20FF" stroke-width="1" stroke-dasharray="1 1.2"/>
<path d="M9 8.1L18.1 10V16.3L20.7 18.6V30.5L9 28Z" fill="#F8D26A" stroke="#E3A82A" stroke-width=".9"/></svg>
<svg class="a" style="left:538px;top:734px" width="15" height="15" viewBox="0 0 15 15">
<rect x="0.5" y="0.5" width="14" height="14" rx="1" fill="#A8C8E6" stroke="#5E7E9E"/>
<rect x="3" y="1" width="9" height="5.2" fill="#F6FAFC"/><rect x="4" y="2.3" width="7" height=".9" fill="#A9CFDC"/><rect x="4" y="4" width="7" height=".9" fill="#A9CFDC"/>
<rect x="3" y="8.5" width="9" height="6" fill="#5A7590"/><rect x="4.5" y="9.5" width="6.5" height="5" fill="#F2F4F6"/><rect x="5" y="10.5" width="1.8" height="3" fill="#3E5A76"/></svg>
<svg class="a" style="left:645px;top:737px" width="9" height="9" viewBox="0 0 9 9">
<path d="M1.2 1.2L7.8 7.8M7.8 1.2L1.2 7.8" stroke="#3A80C0" stroke-width="2.3" stroke-linecap="round"/></svg>
</body></html>
